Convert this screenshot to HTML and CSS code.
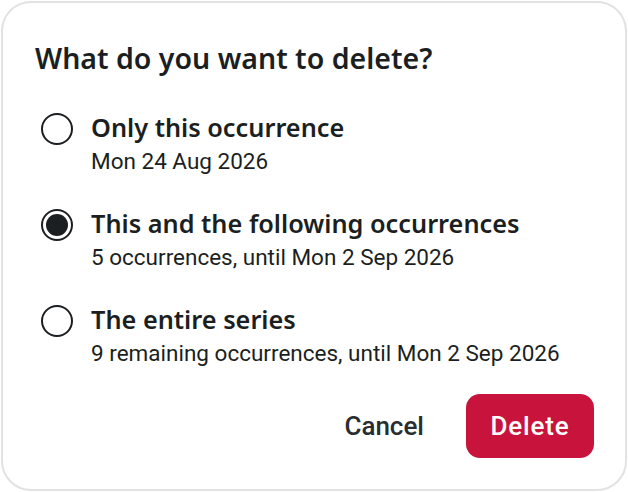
FILE: index.html
```html
<!DOCTYPE html>
<html lang="en">
<head>
<meta charset="utf-8">
<title>Delete occurrence</title>
<link rel="stylesheet" href="styles.css">
</head>
<body>
<div class="dialog">
  <h1 class="title">What do you want to delete?</h1>
  <div class="options">
    <label class="option">
      <span class="radio"></span>
      <span class="text">
        <span class="label">Only this occurrence</span>
        <span class="sub">Mon 24 Aug 2026</span>
      </span>
    </label>
    <label class="option">
      <span class="radio checked"></span>
      <span class="text">
        <span class="label">This and the following occurrences</span>
        <span class="sub">5 occurrences, until Mon 2 Sep 2026</span>
      </span>
    </label>
    <label class="option">
      <span class="radio"></span>
      <span class="text">
        <span class="label">The entire series</span>
        <span class="sub">9 remaining occurrences, until Mon 2 Sep 2026</span>
      </span>
    </label>
  </div>
  <div class="actions">
    <button class="btn cancel">Cancel</button>
    <button class="btn delete">Delete</button>
  </div>
</div>
</body>
</html>
```

FILE: styles.css
```css
html, body {
  margin: 0;
  padding: 0;
  background: #ffffff;
}
body {
  font-family: Roboto, "Liberation Sans", sans-serif;
  color: #1c1f22;
}
.dialog {
  box-sizing: border-box;
  margin: 1px;
  width: 626px;
  height: 490px;
  border: 2px solid #e2e2e2;
  border-radius: 30px;
  padding: 35px 31px 0 32px;
  display: flex;
  flex-direction: column;
}
.title {
  margin: 0;
  font-family: "Noto Sans", Roboto, sans-serif;
  font-size: 28.5px;
  line-height: 40px;
  font-weight: 600;
}
.options {
  margin-top: 32px;
  display: flex;
  flex-direction: column;
  gap: 28px;
  padding-left: 6px;
}
.option {
  display: flex;
  align-items: flex-start;
  gap: 18px;
}
.radio {
  box-sizing: border-box;
  flex: none;
  width: 32px;
  height: 32px;
  margin-top: 3px;
  border: 2px solid #1c1f22;
  border-radius: 50%;
  display: flex;
  align-items: center;
  justify-content: center;
}
.radio.checked::after {
  content: "";
  width: 22px;
  height: 22px;
  border-radius: 50%;
  background: #1c1f22;
}
.text {
  display: flex;
  flex-direction: column;
}
.label {
  font-family: "Noto Sans", Roboto, sans-serif;
  font-size: 25.3px;
  line-height: 34px;
  font-weight: 600;
}
.sub {
  margin-top: 1px;
  font-size: 22.5px;
  line-height: 33px;
  font-weight: 400;
}
.actions {
  margin-top: 24px;
  display: flex;
  justify-content: flex-end;
  gap: 17px;
}
.btn {
  font-family: inherit;
  height: 64px;
  border: none;
  border-radius: 14px;
  font-size: 26px;
  font-weight: 500;
  padding: 0 25px;
  cursor: pointer;
}
.cancel {
  background: transparent;
  color: #2a2d30;
}
.delete {
  background: #c8133c;
  color: #ffffff;
  width: 128px;
  padding: 0;
  letter-spacing: 0.8px;
}
```
